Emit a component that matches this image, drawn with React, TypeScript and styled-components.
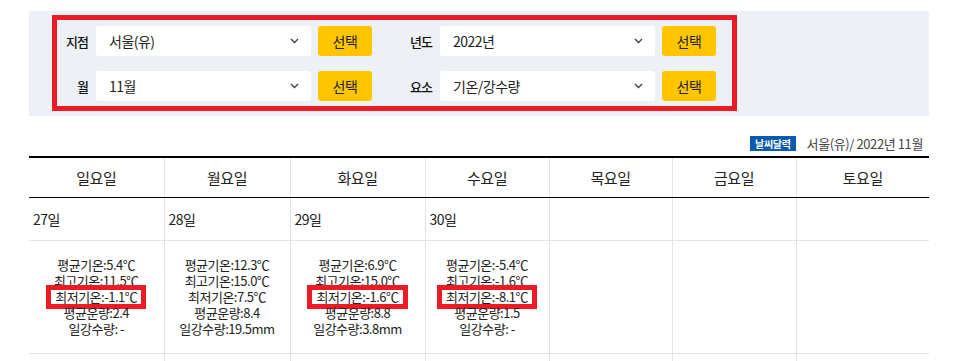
import React from "react";
import styled, { createGlobalStyle } from "styled-components";

const GlobalStyle = createGlobalStyle`
  body {
    margin: 0;
    font-family: "Noto Sans CJK KR", "Noto Sans", sans-serif;
    color: #222;
    background: #fff;
    overflow: hidden;
  }
`;

type Filter = { label: string; value: string };

const filters: Filter[] = [
  { label: "지점", value: "서울(유)" },
  { label: "년도", value: "2022년" },
  { label: "월", value: "11월" },
  { label: "요소", value: "기온/강수량" },
];

const days = ["일요일", "월요일", "화요일", "수요일", "목요일", "금요일", "토요일"];
const colWidths = [135, 126, 135, 124, 123, 124, 133];

type DayData = { date: string; lines: string[]; mark?: number };

const weekData: DayData[] = [
  {
    date: "27일",
    lines: ["평균기온:5.4℃", "최고기온:11.5℃", "최저기온:-1.1℃", "평균운량:2.4", "일강수량: -"],
    mark: 2,
  },
  {
    date: "28일",
    lines: ["평균기온:12.3℃", "최고기온:15.0℃", "최저기온:7.5℃", "평균운량:8.4", "일강수량:19.5mm"],
  },
  {
    date: "29일",
    lines: ["평균기온:6.9℃", "최고기온:15.0℃", "최저기온:-1.6℃", "평균운량:8.8", "일강수량:3.8mm"],
    mark: 2,
  },
  {
    date: "30일",
    lines: ["평균기온:-5.4℃", "최고기온:-1.6℃", "최저기온:-8.1℃", "평균운량:1.5", "일강수량: -"],
    mark: 2,
  },
];

export default function App() {
  return (
    <>
      <GlobalStyle />
      <Page>
        <SearchPanel>
          <SearchForm>
            {filters.map((f) => (
              <FilterGroup key={f.label}>
                <Label>{f.label}</Label>
                <SelectBox>
                  <span>{f.value}</span>
                  <svg width="9" height="6" viewBox="0 0 9 6">
                    <path d="M1 1l3.5 3.5L8 1" fill="none" stroke="#444" strokeWidth="1.4" />
                  </svg>
                </SelectBox>
                <PickButton>선택</PickButton>
              </FilterGroup>
            ))}
          </SearchForm>
        </SearchPanel>

        <Caption>
          <Badge>날씨달력</Badge>
          <CaptionText>서울(유)/ 2022년 11월</CaptionText>
        </Caption>

        <Calendar>
          <colgroup>
            {colWidths.map((w, i) => (
              <col key={i} style={{ width: w }} />
            ))}
          </colgroup>
          <thead>
            <tr>
              {days.map((d) => (
                <HeadCell key={d}>{d}</HeadCell>
              ))}
            </tr>
          </thead>
          <tbody>
            <tr>
              {days.map((d, i) => (
                <DateCell key={d}>{weekData[i]?.date}</DateCell>
              ))}
            </tr>
            <tr>
              {days.map((d, i) => (
                <DataCell key={d}>
                  {weekData[i]?.lines.map((line, j) => (
                    <Line key={j}>
                      {weekData[i].mark === j ? <Marked>{line}</Marked> : line}
                    </Line>
                  ))}
                </DataCell>
              ))}
            </tr>
            <tr>
              {days.map((d) => (
                <DateCell key={d} />
              ))}
            </tr>
          </tbody>
        </Calendar>
      </Page>
    </>
  );
}

const Page = styled.div`
  width: 900px;
  padding: 11px 0 0 29px;
`;

const SearchPanel = styled.div`
  background: #edf0f5;
  padding: 4px 0 5px 23px;
`;

const SearchForm = styled.div`
  width: fit-content;
  border: 5px solid #ed1c24;
  padding: 6px 16px 5px 1px;
  display: grid;
  grid-template-columns: auto auto;
  column-gap: 30px;
  row-gap: 15px;
`;

const FilterGroup = styled.div`
  display: flex;
  align-items: center;
`;

const Label = styled.span`
  width: 30px;
  margin-right: 8px;
  text-align: right;
  font-size: 13px;
  font-weight: 500;
  letter-spacing: -1px;
  color: #111;
`;

const SelectBox = styled.div`
  width: 215px;
  height: 30px;
  box-sizing: border-box;
  padding: 0 12px 0 13px;
  margin-right: 7px;
  background: #fff;
  border-radius: 3px;
  display: flex;
  align-items: center;
  justify-content: space-between;
  font-size: 14px;
  letter-spacing: -0.5px;
  color: #222;
`;

const PickButton = styled.button`
  width: 54px;
  height: 30px;
  border: none;
  border-radius: 3px;
  background: #ffc600;
  font-family: inherit;
  font-size: 14px;
  letter-spacing: -0.5px;
  color: #222;
  padding: 0;
`;

const Caption = styled.div`
  display: flex;
  justify-content: flex-end;
  align-items: center;
  gap: 11px;
  padding: 19px 6px 4px 0;
`;

const Badge = styled.span`
  background: #0a5aaf;
  color: #fff;
  font-size: 10px;
  font-weight: 700;
  line-height: 15px;
  padding: 0 5px;
  letter-spacing: -0.3px;
`;

const CaptionText = styled.span`
  font-size: 13px;
  color: #444;
  letter-spacing: -0.4px;
  line-height: 17px;
`;

const Calendar = styled.table`
  width: 900px;
  table-layout: fixed;
  border-collapse: collapse;
  border-top: 2px solid #000;
`;

const HeadCell = styled.th`
  height: 39px;
  padding: 0;
  font-size: 15px;
  font-weight: 400;
  letter-spacing: -0.5px;
  color: #222;
  border-bottom: 1px solid #000;
  & + & {
    border-left: 1px solid #dfe4ec;
  }
`;

const DateCell = styled.td`
  height: 42px;
  padding: 0 0 0 4px;
  font-size: 14px;
  letter-spacing: -0.5px;
  border-bottom: 1px solid #dfe4ec;
  & + & {
    border-left: 1px solid #dfe4ec;
  }
`;

const DataCell = styled.td`
  height: 112px;
  padding: 0;
  text-align: center;
  vertical-align: middle;
  font-size: 13px;
  letter-spacing: -0.5px;
  border-bottom: 1px solid #dfe4ec;
  & + & {
    border-left: 1px solid #dfe4ec;
  }
`;

const Line = styled.div`
  line-height: 16px;
`;

const Marked = styled.span`
  display: inline-block;
  line-height: 14px;
  height: 14px;
  padding: 0 4px;
  background: #fff;
  outline: 5px solid #ed1c24;
`;
